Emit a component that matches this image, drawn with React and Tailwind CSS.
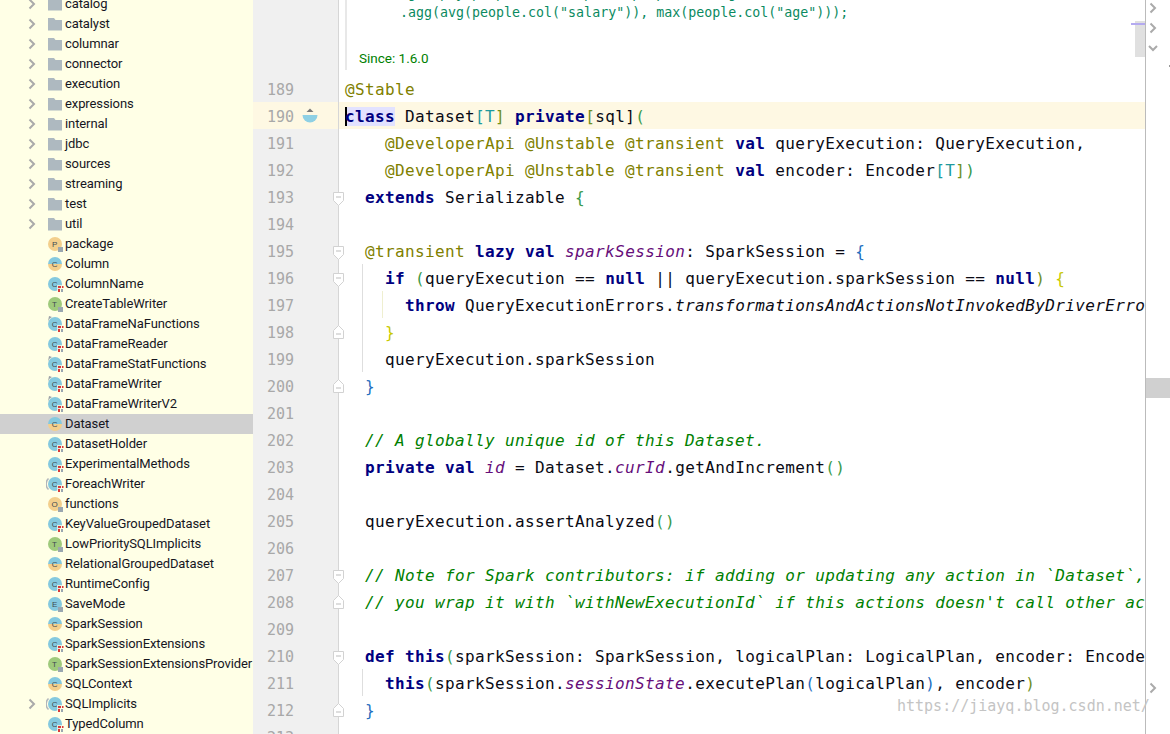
import React from "react";

const A = "text-[#808000]";
const K = "font-bold text-[#000080]";
const C = "italic text-[#008000]";
const F = "italic text-[#660e7a]";
const M = "italic";
const TEAL = "text-[#20999d]";
const GRN = "text-[#3a9a4a]";
const OLV = "text-[#6f8f1f]";
const YEL = "text-[#c9c900]";
const BLU = "text-[#1f6fc0]";

const lines = [
  { n: 189, t: [["@Stable", A]] },
  { n: 190, active: true, icon: true, t: [["class", "font-bold text-[#000080] bg-[#e2e2ff] shadow-[inset_2px_0_0_#000]"], [" Dataset"], ["[T", TEAL], ["]", OLV], [" "], ["private", K], ["[", OLV], ["sql"], ["]"], ["(", GRN]] },
  { n: 191, t: [["    "], ["@DeveloperApi @Unstable @transient", A], [" "], ["val", K], [" queryExecution: QueryExecution,"]] },
  { n: 192, t: [["    "], ["@DeveloperApi @Unstable @transient", A], [" "], ["val", K], [" encoder: Encoder"], ["[T", TEAL], ["]", OLV], [")", GRN]] },
  { n: 193, fold: "start", t: [["  "], ["extends", K], [" Serializable "], ["{", GRN]] },
  { n: 194, t: [] },
  { n: 195, fold: "start", t: [["  "], ["@transient", A], [" "], ["lazy val", K], [" "], ["sparkSession", F], [": SparkSession = "], ["{", BLU]] },
  { n: 196, fold: "start", guide: "g1", t: [["    "], ["if", K], [" "], ["(", GRN], ["queryExecution == "], ["null", K], [" || queryExecution.sparkSession == "], ["null", K], [")", OLV], [" "], ["{", YEL]] },
  { n: 197, guide: "g2", t: [["      "], ["throw", K], [" QueryExecutionErrors."], ["transformationsAndActionsNotInvokedByDriverError", M], ["()"]] },
  { n: 198, fold: "end", guide: "g1", t: [["    "], ["}", YEL]] },
  { n: 199, guide: "g1", t: [["    queryExecution.sparkSession"]] },
  { n: 200, fold: "end", t: [["  "], ["}", BLU]] },
  { n: 201, t: [] },
  { n: 202, t: [["  "], ["// A globally unique id of this Dataset.", C]] },
  { n: 203, t: [["  "], ["private val", K], [" "], ["id", F], [" = Dataset."], ["curId", F], [".getAndIncrement"], ["()", GRN]] },
  { n: 204, t: [] },
  { n: 205, t: [["  queryExecution.assertAnalyzed"], ["()", GRN]] },
  { n: 206, t: [] },
  { n: 207, fold: "start", t: [["  "], ["// Note for Spark contributors: if adding or updating any action in `Dataset`, please make sure", C]] },
  { n: 208, fold: "end", t: [["  "], ["// you wrap it with `withNewExecutionId` if this actions doesn't call other action", C]] },
  { n: 209, t: [] },
  { n: 210, fold: "start", t: [["  "], ["def this", K], ["(", GRN], ["sparkSession: SparkSession, logicalPlan: LogicalPlan, encoder: Encoder[T]) = {"]] },
  { n: 211, guide: "g1", t: [["    "], ["this", K], ["(", GRN], ["sparkSession."], ["sessionState", F], [".executePlan"], ["(", BLU], ["logicalPlan"], [")", BLU], [", encoder"], [")", OLV]] },
  { n: 212, fold: "end", t: [["  "], ["}", BLU]] },
  { n: 213, t: [] },
];

const tree = [
  ["catalog", "folder", "", "", 1], ["catalyst", "folder", "", "", 1], ["columnar", "folder", "", "", 1], ["connector", "folder", "", "", 1],
  ["execution", "folder", "", "", 1], ["expressions", "folder", "", "", 1], ["internal", "folder", "", "", 1], ["jdbc", "folder", "", "", 1],
  ["sources", "folder", "", "", 1], ["streaming", "folder", "", "", 1], ["test", "folder", "", "", 1], ["util", "folder", "", "", 1],
  ["package", "p", "gray"], ["Column", "half"], ["ColumnName", "c", "red"], ["CreateTableWriter", "t", "gray"],
  ["DataFrameNaFunctions", "c", "red", "pin"], ["DataFrameReader", "c", "red"], ["DataFrameStatFunctions", "c", "red", "pin"],
  ["DataFrameWriter", "c", "red", "pin"], ["DataFrameWriterV2", "c", "red", "pin"], ["Dataset", "half"], ["DatasetHolder", "c", "red"],
  ["ExperimentalMethods", "c", "red"], ["ForeachWriter", "c", "red", "paren"], ["functions", "o", "gray"], ["KeyValueGroupedDataset", "c", "red"],
  ["LowPrioritySQLImplicits", "t", "gray"], ["RelationalGroupedDataset", "half"], ["RuntimeConfig", "c", "red"], ["SaveMode", "e", "gray"],
  ["SparkSession", "half"], ["SparkSessionExtensions", "c", "red"], ["SparkSessionExtensionsProvider", "t", "gray"], ["SQLContext", "half"],
  ["SQLImplicits", "c", "red", "paren", 1], ["TypedColumn", "c", "red"],
];

function Chevron({ down }) {
  return (
    <svg width="10" height="12" viewBox="0 0 10 12" className="shrink-0">
      <path d={down ? "M1 4l4 4 4-4" : "M2.5 1.5l4.5 4.5-4.5 4.5"} fill="none" stroke="#aaaaaa" strokeWidth="2" />
    </svg>
  );
}

function NodeIcon({ kind, badge, deco }) {
  if (kind === "folder") {
    return (
      <svg width="18" height="18" viewBox="0 0 18 18" className="shrink-0">
        <path d="M2 3h6l1.5 2H16v10.500H2z" fill="#aeb9c0" />
      </svg>
    );
  }
  const fills = { c: "#84c9df", e: "#84c9df", t: "#9fca7c", o: "#f3cf8c", p: "#f3cf8c" };
  const letter = { c: "C", half: "C", t: "T", o: "O", e: "E", p: "P" }[kind];
  return (
    <svg width="18" height="18" viewBox="0 0 18 18" className="shrink-0">
      {kind === "half" ? (
        <>
          <path d="M2 9a7 7 0 0 1 14 0z" fill="#84c9df" />
          <path d="M2 9a7 7 0 0 0 14 0z" fill="#f3cf8c" />
        </>
      ) : (
        <circle cx="9" cy="9" r="7" fill={fills[kind]} />
      )}
      {deco === "pin" && <path d="M2 6.500A7 7 0 0 1 6 2L3 1z" fill="#9aa0a6" />}
      {deco === "paren" && <path d="M2.500 3.500A7.500 7.500 0 0 0 2.500 14.500" fill="none" stroke="#b0b5ba" strokeWidth="1.500" />}
      <text x="8.500" y="12" textAnchor="middle" fontSize="8" fontFamily="'Liberation Sans', sans-serif" fill="#3f4b52">{letter}</text>
      {badge === "gray" && <rect x="12" y="12" width="5" height="5" fill="#9aa7b0" />}
      {badge === "red" && (
        <>
          <rect x="11" y="10" width="7" height="8" fill="#ffffe6" opacity="0.7" />
          <rect x="12" y="11" width="3" height="2" fill="#d93a3a" />
          <rect x="16" y="11" width="1.500" height="2" fill="#d93a3a" />
          <rect x="12" y="14" width="2" height="3" fill="#d93a3a" />
          <rect x="15" y="14" width="2" height="3" fill="#9aa7b0" />
        </>
      )}
    </svg>
  );
}

function FoldMark({ type }) {
  const start = type === "start";
  return (
    <svg width="12" height="15" viewBox="0 0 12 15" className={`absolute left-[-6px] ${start ? "top-[9px]" : "top-[6px]"}`}>
      <path
        d={start ? "M.5.500h10v8l-5 5-5-5z" : "M.5 14.500h10v-8l-5-5-5 5z"}
        fill="#ffffff"
        stroke="#d2d2d2"
      />
      <path d={start ? "M3 5h5" : "M3 10h5"} stroke="#bdbdbd" />
    </svg>
  );
}

function Bowl() {
  return (
    <svg width="16" height="16" viewBox="0 0 16 16" className="absolute left-[49px] top-[6px]">
      <path d="M8 .500l3.500 3.500h-7z" fill="#7a7a7a" />
      <path d="M.5 7h15a7.500 7.500 0 0 1-15 0z" fill="#8ed0e4" />
    </svg>
  );
}

function CodeRow({ line }) {
  const bg = line.active ? "bg-[#fef8e3]" : "";
  return (
    <div className={`flex h-[27px] shrink-0 ${bg}`}>
      <div className={`relative flex h-full w-[86px] shrink-0 items-center border-r border-[#d6d6d6] pl-[14px] pt-[4px] text-[15px] text-[#a8a8a8] ${line.active ? "bg-[#fef8e3]" : "bg-[#f0f0f0]"}`}>
        {line.n}
        {line.icon && <Bowl />}
      </div>
      <div className="relative h-full min-w-0 flex-1">
        {line.fold && <FoldMark type={line.fold} />}
        {line.guide === "g1" && <span className="absolute left-[23px] top-0 h-[27px] w-px bg-[#dedede]" />}
        {line.guide === "g2" && (
          <>
            <span className="absolute left-[23px] top-0 h-[27px] w-px bg-[#dedede]" />
            <span className="absolute left-[43px] top-0 h-[27px] w-px bg-[#efefd0]" />
          </>
        )}
        <div className="relative h-[27px] whitespace-pre pl-[6px] text-[16px] leading-[29px] tracking-[0.37px] text-[#0a0a14]">
          {line.t.map((s, i) => (
            <span key={i} className={s[1] || ""}>{s[0]}</span>
          ))}
        </div>
      </div>
    </div>
  );
}

export default function App() {
  return (
    <div className="relative flex h-[734px] w-[1170px] overflow-hidden bg-white">
      <aside className="h-full w-[253px] shrink-0 overflow-hidden bg-[#ffffe6] font-['Roboto',sans-serif] text-[13px] tracking-[-0.1px] text-[#16161f]">
        <div className="-mt-[6px]">
          {tree.map(([name, kind, badge, deco, arrow]) => (
            <div key={name} className={`flex h-5 items-center whitespace-nowrap pl-[27px] ${name === "Dataset" ? "bg-[#d0d0d0]" : ""}`}>
              <span className="flex w-[19px] shrink-0">{arrow ? <Chevron /> : null}</span>
              <NodeIcon kind={kind} badge={badge} deco={deco} />
              <span className="ml-px">{name}</span>
            </div>
          ))}
        </div>
      </aside>

      <main className="flex h-full w-[892px] shrink-0 flex-col overflow-hidden font-['DejaVu_Sans_Mono',monospace]">
        <div className="flex h-[75px] shrink-0">
          <div className="h-full w-[86px] shrink-0 border-r border-[#d6d6d6] bg-[#f0f0f0]" />
          <div className="h-full flex-1 pl-[6px]">
            <div className="h-[70px] overflow-hidden border-l-[2px] border-[#e8e8e8] pl-[12px]">
              <div className="-mt-[16px] whitespace-pre pl-[41px] text-[13.3px] leading-[19px] text-[#0b8a5f]">
                <div>.groupBy(people.col("dept"), people.col("gender"));</div>
                <div>.agg(avg(people.col("salary")), max(people.col("age")));</div>
              </div>
              <div className="mt-[26px] font-['Roboto',sans-serif] text-[13.5px] leading-[20px] text-[#008000]">Since: 1.6.0</div>
            </div>
          </div>
        </div>
        {lines.map((l) => (
          <CodeRow key={l.n} line={l} />
        ))}
      </main>

      <div className="h-full flex-1 border-l border-[#bbbbbb]">
        <div className="-mt-[2px]">
          {Array.from({ length: 37 }).map((_, i) => (
            <div key={i} className={`flex h-5 items-center pl-[2px] ${i === 19 ? "bg-[#d0d0d0]" : ""}`}>
              {(i === 0 || i === 1 || i === 34) && <Chevron />}
              {i === 2 && <Chevron down />}
            </div>
          ))}
        </div>
      </div>

      <span className="absolute left-[1135px] top-[21px] h-[36px] w-[10px] bg-[#e0e0e0]" />
      <span className="absolute left-[1131px] top-[23px] h-[2px] w-[14px] bg-[#b4aaf0]" />
      <span className="absolute left-[1169px] top-[65px] h-[2px] w-px bg-[#999999]" />
      <span className="absolute left-[897px] top-[695px] font-['DejaVu_Sans_Mono',monospace] text-[15px] leading-[22px] text-[#c4c4c4]">https://jiayq.blog.csdn.net/</span>
    </div>
  );
}
